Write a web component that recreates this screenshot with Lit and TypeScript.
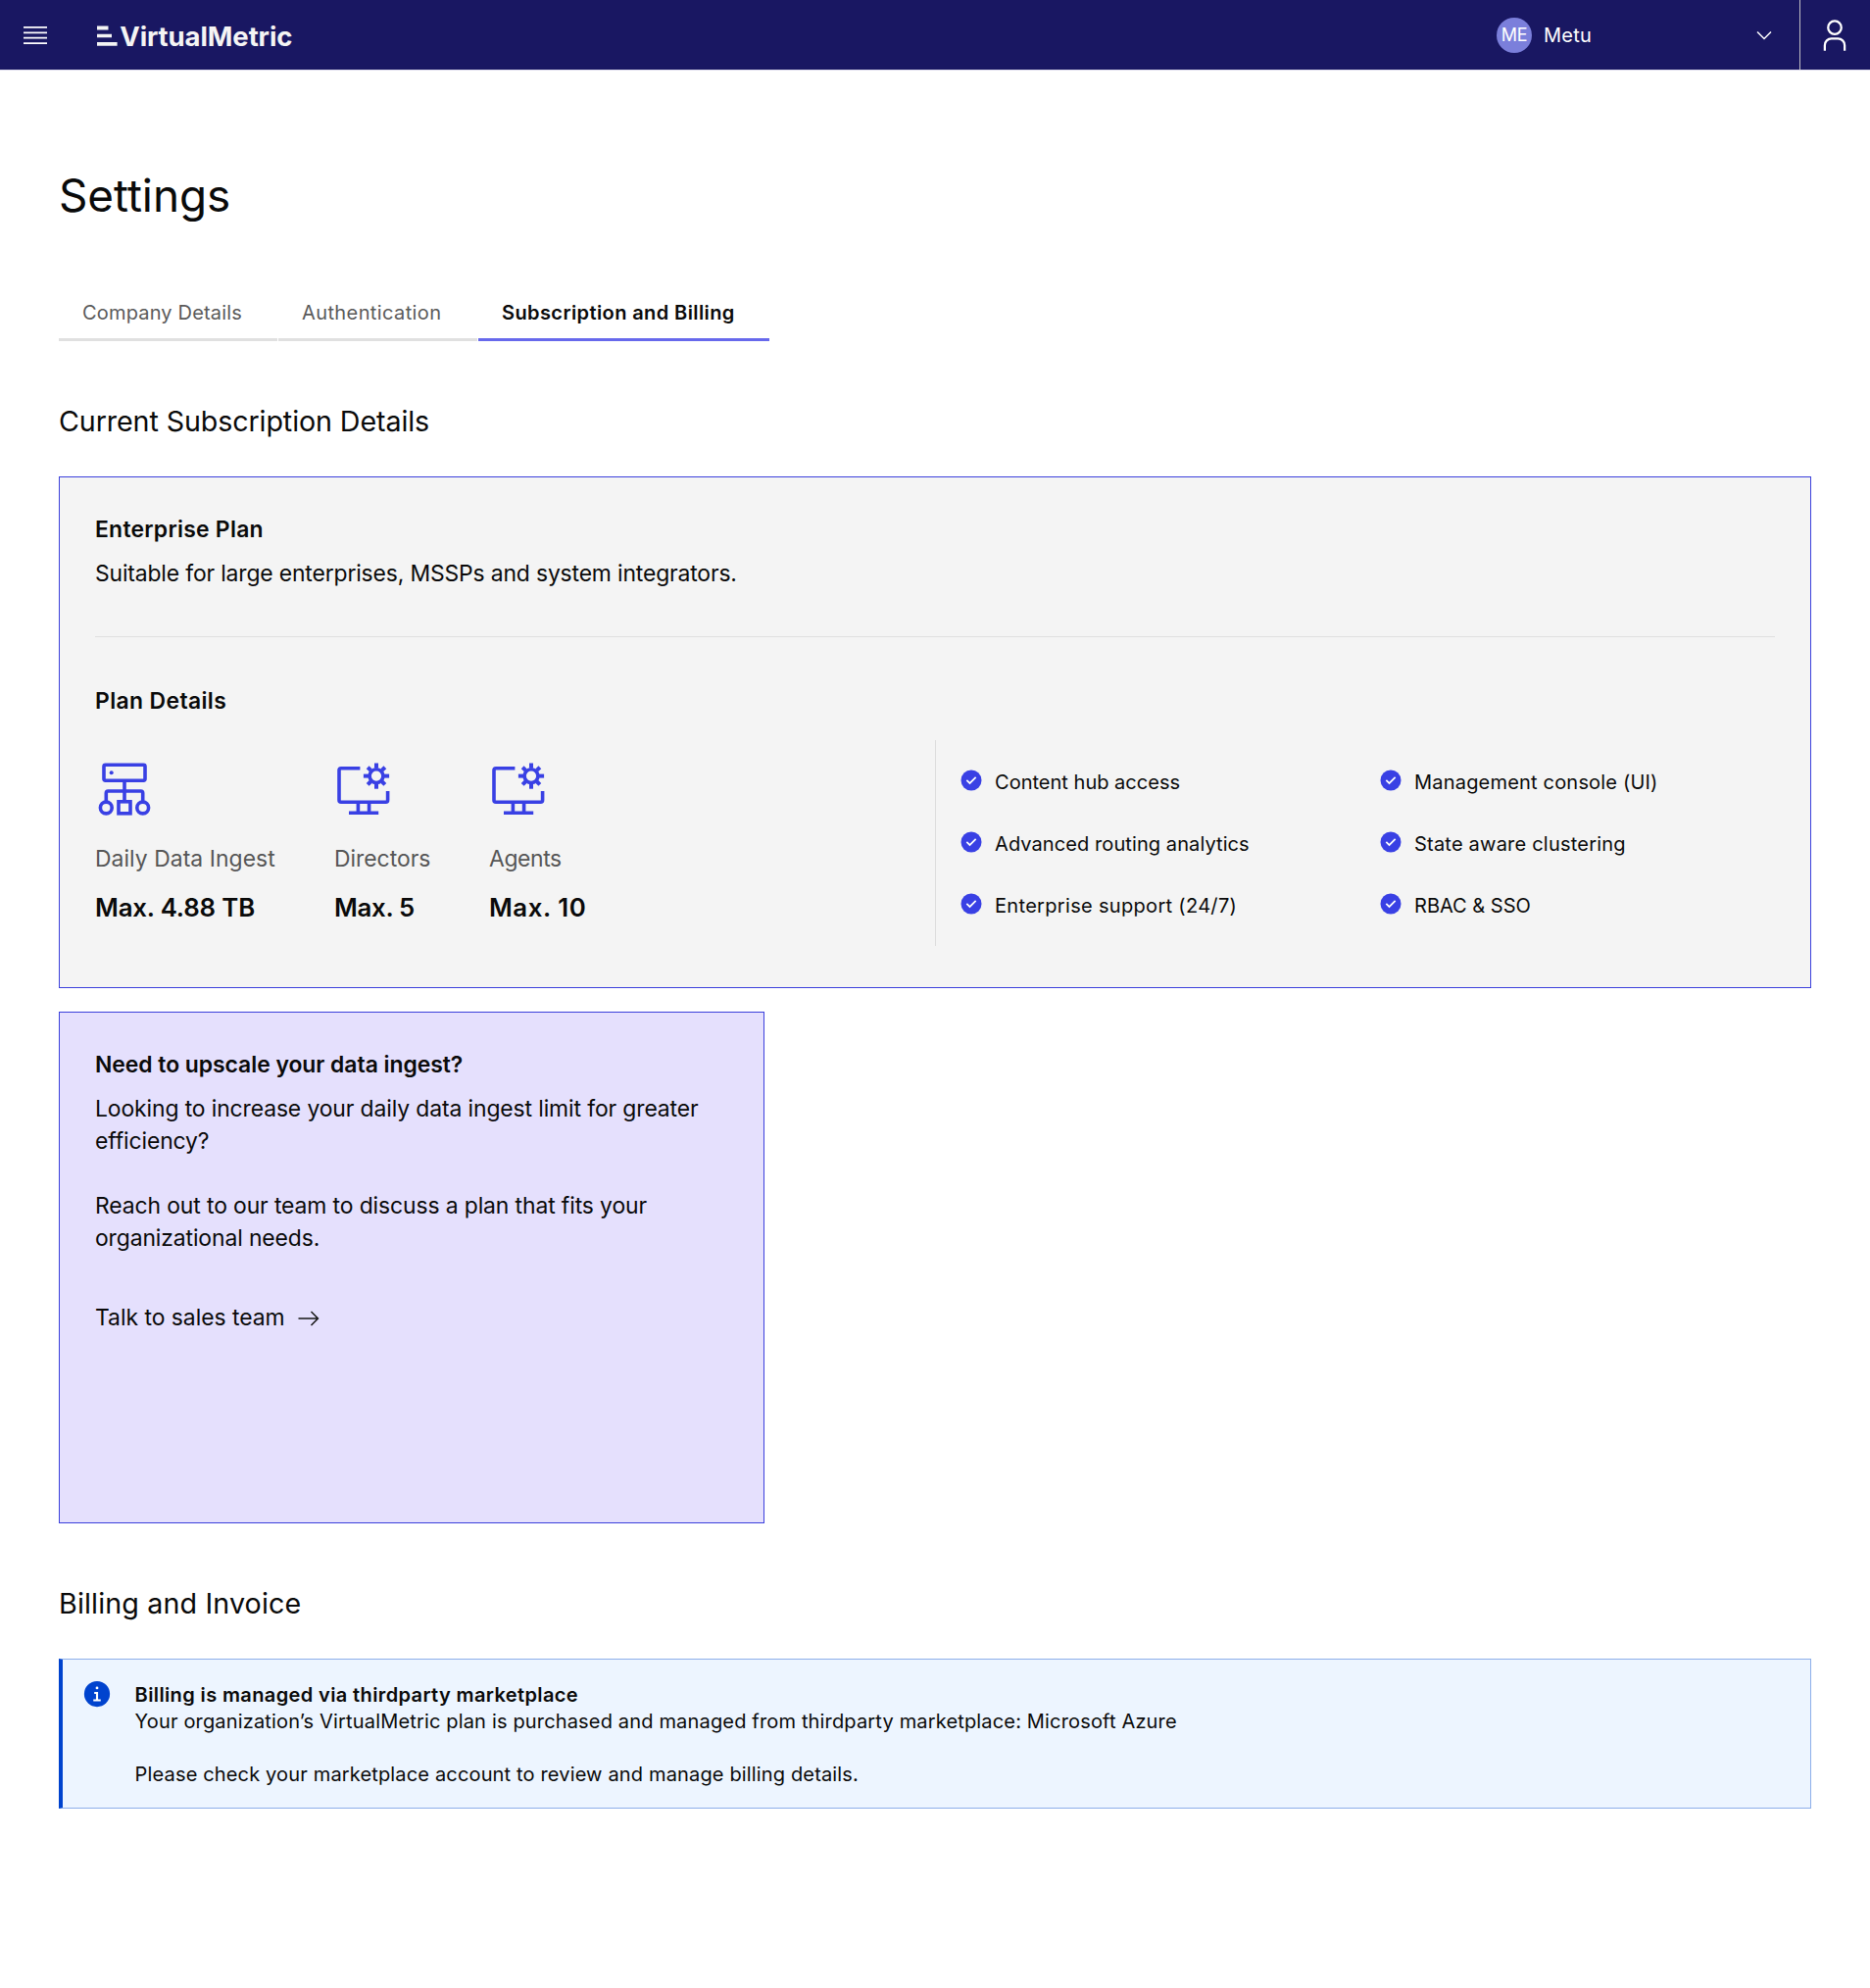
import { LitElement, html, svg, css } from "lit";
import { customElement } from "lit/decorators.js";

interface Tab { label: string; active?: boolean; width: number; track: number }
interface Metric { icon: "server" | "monitor"; label: string; labelTrack: number; value: string; valueTrack: number }
interface Feature { label: string; track: number }

const TABS: Tab[] = [
  { label: "Company Details", width: 223, track: 0.15 },
  { label: "Authentication", width: 203, track: 0.38 },
  { label: "Subscription and Billing", width: 297, track: 0.388, active: true },
];

const METRICS: Metric[] = [
  { icon: "server", label: "Daily Data Ingest", labelTrack: 0.05, value: "Max. 4.88 TB", valueTrack: -0.158 },
  { icon: "monitor", label: "Directors", labelTrack: -0.02, value: "Max. 5", valueTrack: -0.3 },
  { icon: "monitor", label: "Agents", labelTrack: -0.402, value: "Max. 10", valueTrack: 0.563 },
];

const FEATURES: Feature[] = [
  { label: "Content hub access", track: 0.0 },
  { label: "Management console (UI)", track: 0.175 },
  { label: "Advanced routing analytics", track: 0.07 },
  { label: "State aware clustering", track: 0.2 },
  { label: "Enterprise support (24/7)", track: 0.3 },
  { label: "RBAC & SSO", track: -0.013 },
];

const serverIcon = html`<svg class="pictogram" viewBox="0 0 60 60">
  <rect x="9" y="5.2" width="42" height="16" rx="1.6" />
  <circle class="solid" cx="16.7" cy="13.2" r="2" />
  <path d="M30 21.2V42.5M11.3 43V34a2 2 0 0 1 2-2H46.7a2 2 0 0 1 2 2V43" />
  <circle cx="11.3" cy="49" r="5.9" /><circle cx="48.7" cy="49" r="5.9" />
  <rect x="24" y="42.8" width="12" height="12" />
</svg>`;

const teeth = [0, 45, 90, 135, 180, 225, 270, 315].map(
  (a) => svg`<path d="M43 8.6V${a % 90 ? 4.1 : 3.5}" transform="rotate(${a} 43 16.6)" />`
);

const monitorIcon = html`<svg class="pictogram" viewBox="0 0 60 60">
  <path d="M26.4 8.8H7a2 2 0 0 0-2 2V41.3a2 2 0 0 0 2 2H52.6a2 2 0 0 0 2-2V32" />
  <path d="M24.4 43.3V54.3M35.6 43.3V54.3M15 54.3H45.2" />
  <circle cx="43" cy="16.6" r="6.9" />
  <g class="teeth">${teeth}</g>
</svg>`;

const checkIcon = html`<svg class="check" viewBox="0 0 32 32">
  <circle cx="16" cy="16" r="14" />
  <path class="tick" d="M14 21.59 9 16.59 10.59 15 14 18.41 21.41 11 23 12.59z" />
</svg>`;

@customElement("app-header")
class AppHeader extends LitElement {
  static styles = css`
    :host { display: block; }
    .bar {
      box-sizing: border-box; height: 72px; display: flex; align-items: center;
      background: #191762; border-bottom: 1px solid #e0deee; color: #fff; padding-left: 21px;
    }
    svg { display: block; fill: #fff; flex: none; }
    .menu { width: 30px; height: 30px; }
    .bars { width: 24px; height: 24px; margin-left: 48px; fill: #f4f4f4; }
    .brand {
      padding-top: 2px; line-height: 36px; font-size: 27.5px; font-weight: 700;
      letter-spacing: -0.1px; color: #f4f4f4; margin-left: -0.8px;
    }
    .spacer { flex: 1; }
    .tenant { display: flex; align-items: center; width: 285px; height: 70px; }
    .avatar {
      box-sizing: border-box; width: 36px; height: 36px; border-radius: 50%; background: #7b7fdb;
      display: flex; align-items: center; justify-content: center; padding-bottom: 1px;
      font-size: 18px; letter-spacing: -0.3px; line-height: 35px;
    }
    .name { margin-left: 12px; font-size: 20.05px; line-height: 27px; letter-spacing: 0.215px; flex: 1; padding-top: 1px; }
    .chevron { width: 24px; height: 24px; }
    .account {
      box-sizing: border-box; width: 72px; height: 71px; border-left: 1px solid #c1c0c4;
      display: flex; align-items: center; padding-left: 17.4px; margin-left: 24px;
    }
    .user { width: 36px; height: 36px; }
  `;
  render() {
    return html`<header class="bar">
      <svg class="menu" viewBox="0 0 20 20"><path d="M2 14.8h16V16H2zM2 11.2h16v1.2H2zM2 7.6h16v1.2H2zM2 4h16v1.2H2z" /></svg>
      <svg class="bars" viewBox="0 0 24 24"><path d="M0 2.6h11.5v3.8H0zM0 10.8h15v3.5H0zM0 19h20.6v3.7H0z" /></svg>
      <div class="brand">VirtualMetric</div>
      <div class="spacer"></div>
      <div class="tenant">
        <div class="avatar">ME</div>
        <div class="name">Metu</div>
        <svg class="chevron" viewBox="0 0 16 16"><path d="M8 11 3 6l.7-.7L8 9.6l4.3-4.3.7.7z" /></svg>
      </div>
      <div class="account">
        <svg class="user" viewBox="0 0 32 32">
          <path d="M16 4a5 5 0 1 1-5 5 5 5 0 0 1 5-5m0-2a7 7 0 1 0 7 7 7 7 0 0 0-7-7zM26 30h-2v-5a5 5 0 0 0-5-5h-6a5 5 0 0 0-5 5v5H6v-5a7 7 0 0 1 7-7h6a7 7 0 0 1 7 7z" />
        </svg>
      </div>
    </header>`;
  }
}

@customElement("app-root")
class AppRoot extends LitElement {
  static styles = css`
    :host {
      display: block; min-height: 2028px; background: #fff; color: #0a0a0a;
      font-family: Inter, "Noto Sans", sans-serif; font-size: 22.92px; line-height: 33px;
    }
    h1, h2, h3, p { margin: 0; font-weight: 400; }
    svg { display: block; flex: none; }
    main { padding: 98px 60px 0; }
    h1 { font-size: 45.84px; line-height: 60px; letter-spacing: -0.038px; }
    .tabs { display: flex; gap: 1px; margin-top: 58px; }
    .tab {
      box-sizing: border-box; height: 60px; padding: 18px 0 0 24px; border-bottom: 3px solid #e0e0e0;
      font-size: 20.05px; line-height: 27px; color: #5a5a5a; white-space: nowrap;
    }
    .tab.active { font-weight: 600; color: #0a0a0a; border-color: #6769ec; }
    h2 { font-size: 28.65px; line-height: 42px; }
    .h-current { margin-top: 61px; letter-spacing: -0.1px; }
    .h-billing { margin-top: 61px; letter-spacing: 0.15px; }
    h3 { font-size: 22.92px; line-height: 33px; font-weight: 600; }
    .card { box-sizing: border-box; height: 522px; padding: 37px 36px 35px; border: 1px solid #3b40dc; }
    .plan { margin-top: 35px; background: #f4f4f4; }
    .h-plan { letter-spacing: 0.25px; }
    .summary { margin-top: 12px; letter-spacing: -0.155px; }
    .rule { height: 1px; background: #e0e0e0; margin: 47px 0 49px; }
    .h-details { letter-spacing: 0.369px; }
    .details { display: grid; grid-template-columns: 857px 1fr; margin-top: 23px; height: 210px; }
    .metrics { display: grid; grid-template-columns: 184px 98px auto; column-gap: 60px; justify-content: start; padding-top: 20px; }
    .pictogram { width: 60px; height: 60px; fill: none; stroke: #3940e4; stroke-width: 3.6; }
    .teeth { stroke-width: 4; }
    .solid { fill: #3940e4; stroke: none; }
    .label { margin-top: 25px; color: #565656; white-space: nowrap; }
    .value { margin-top: 15px; font-size: 25.8px; line-height: 36px; font-weight: 600; white-space: nowrap; }
    .features {
      border-left: 1px solid #dcdcdc; display: grid; grid-template-columns: 1fr 1fr;
      align-content: start; row-gap: 35px; padding-top: 29px;
    }
    .feature { display: flex; gap: 12px; padding-left: 24px; font-size: 20.05px; line-height: 27px; white-space: nowrap; }
    .feature span { padding-top: 1px; }
    .check { width: 24px; height: 24px; fill: #3940e4; }
    .tick { fill: #fff; }
    .upsell { margin-top: 24px; width: 720px; background: #e5e0fd; }
    .h-upsell { letter-spacing: -0.04px; }
    .copy { margin-top: 12px; letter-spacing: -0.116px; }
    .copy + .copy { margin-top: 33px; }
    .cta { display: flex; align-items: center; gap: 12px; margin-top: 48px; letter-spacing: -0.028px; }
    .arrow { width: 24px; height: 24px; fill: #161616; }
    .notice {
      box-sizing: border-box; height: 153px; margin-top: 35px; display: flex;
      border: 1px solid #8daee9; border-left: 4px solid #0043ce; background: #edf5ff;
      padding: 23px 20px 0; font-size: 20.05px; line-height: 27px;
    }
    .info { width: 30px; height: 30px; fill: #0043ce; margin: -3px 23.6px 0 0; }
    .info .mark { fill: #fff; }
    .n-title { font-weight: 600; letter-spacing: 0.365px; }
    .n-one { letter-spacing: 0.147px; }
    .n-two { margin-top: 27px; letter-spacing: 0.14px; }
  `;

  render() {
    return html`
      <app-header></app-header>
      <main>
        <h1>Settings</h1>
        <nav class="tabs">
          ${TABS.map((t) => html`<div class="tab ${t.active ? "active" : ""}" style="width:${t.width}px;letter-spacing:${t.track}px">${t.label}</div>`)}
        </nav>

        <h2 class="h-current">Current Subscription Details</h2>
        <section class="card plan">
          <h3 class="h-plan">Enterprise Plan</h3>
          <p class="summary">Suitable for large enterprises, MSSPs and system integrators.</p>
          <div class="rule"></div>
          <h3 class="h-details">Plan Details</h3>
          <div class="details">
            <div class="metrics">
              ${METRICS.map((m) => html`<div>
                ${m.icon === "server" ? serverIcon : monitorIcon}
                <div class="label" style="letter-spacing:${m.labelTrack}px">${m.label}</div>
                <div class="value" style="letter-spacing:${m.valueTrack}px">${m.value}</div>
              </div>`)}
            </div>
            <div class="features">
              ${FEATURES.map((f) => html`<div class="feature">${checkIcon}<span style="letter-spacing:${f.track}px">${f.label}</span></div>`)}
            </div>
          </div>
        </section>

        <section class="card upsell">
          <h3 class="h-upsell">Need to upscale your data ingest?</h3>
          <p class="copy">Looking to increase your daily data ingest limit for greater efficiency?</p>
          <p class="copy">Reach out to our team to discuss a plan that fits your organizational needs.</p>
          <div class="cta">
            <span>Talk to sales team</span>
            <svg class="arrow" viewBox="0 0 16 16"><path d="M9.3 3.7 13.1 7.5H1v1h12.1L9.3 12.3 10 13l5-5-5-5z" /></svg>
          </div>
        </section>

        <h2 class="h-billing">Billing and Invoice</h2>
        <section class="notice">
          <svg class="info" viewBox="0 0 32 32">
            <circle cx="16" cy="16" r="14" />
            <path class="mark" d="M16 8a1.5 1.5 0 1 1-1.5 1.5A1.5 1.5 0 0 1 16 8zm4 16.125h-8v-2.25h2.875v-5.75H13v-2.25h4.125v8H20z" />
          </svg>
          <div>
            <p class="n-title">Billing is managed via thirdparty marketplace</p>
            <p class="n-one">Your organization’s VirtualMetric plan is purchased and managed from thirdparty marketplace: Microsoft Azure</p>
            <p class="n-two">Please check your marketplace account to review and manage billing details.</p>
          </div>
        </section>
      </main>
    `;
  }
}
